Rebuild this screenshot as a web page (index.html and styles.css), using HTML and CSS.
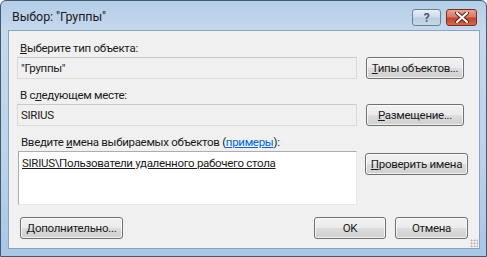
FILE: index.html
```html
<!doctype html>
<html>
  <head>
    <meta charset='utf-8'>
    <title>Выбор: "Группы"</title>
    <link rel="stylesheet" href="styles.css">
  </head>
  <body>

    <div class="window">
      <div class="titlebar">
        <span class="title">Выбор: "Группы"</span>
        <div class="caption">
          <span class="cap help">?</span>
          <span class="cap close">
            <svg width="14" height="11" viewBox="0 0 14 11">
              <path d="M2 1 L12 10 M12 1 L2 10" stroke="#5a1a12" stroke-width="4" stroke-linecap="round"/>
              <path d="M2 1 L12 10 M12 1 L2 10" stroke="#fff" stroke-width="2.2" stroke-linecap="round"/>
            </svg>
          </span>
        </div>
      </div>

      <div class="client">
        <div class="row first">
          <div class="main">
            <div class="label"><u>В</u>ыберите тип объекта:</div>
            <div class="field">"Группы"</div>
          </div>
          <div class="side">
            <button class="btn narrow"><u>Т</u>ипы объектов...</button>
          </div>
        </div>

        <div class="row">
          <div class="main">
            <div class="label">В с<u>л</u>едующем месте:</div>
            <div class="field">SIRIUS</div>
          </div>
          <div class="side">
            <button class="btn narrow"><u>Р</u>азмещение...</button>
          </div>
        </div>

        <div class="row names">
          <div class="main">
            <div class="label">Введите <u>и</u>мена выбираемых объектов (<a class="link">примеры</a>):</div>
            <div class="textbox"><u>SIRIUS\Пользователи удаленного рабочего стола</u></div>
          </div>
          <div class="side">
            <button class="btn wide check"><u>П</u>роверить имена</button>
          </div>
        </div>

        <div class="footer">
          <button class="btn more"><u>Д</u>ополнительно...</button>
          <div class="spacer"></div>
          <button class="btn ok">OK</button>
          <button class="btn cancel">Отмена</button>
        </div>
        <div class="grip"></div>
      </div>
    </div>

  </body>
</html>
```

FILE: styles.css
```css
body {
  margin: 0;
  font-family: Roboto, 'Noto Sans', sans-serif;
  font-size: 11.5px;
  letter-spacing: -0.3px;
  color: #1a1a1a;
}

.window {
  width: 487px;
  height: 257px;
  box-sizing: border-box;
  border: 1px solid #44586e;
  border-radius: 6px 6px 0 0;
  background: linear-gradient(to bottom, #b4cde8 0%, #c6d9ed 12%, #bcd3ea 60%, #a9c6e6 100%);
  padding: 0 6px 7px 7px;
  display: flex;
  flex-direction: column;
}

.titlebar {
  height: 29px;
  display: flex;
  align-items: flex-start;
}
.title {
  padding: 8px 0 0 4px;
  font-size: 12.5px;
  letter-spacing: -0.1px;
}
.caption {
  margin-left: auto;
  margin-top: 8px;
  margin-right: 3px;
  display: flex;
  gap: 5px;
}
.cap {
  height: 17px;
  box-sizing: border-box;
  border: 1px solid #6d7f94;
  border-radius: 3px;
  display: flex;
  align-items: center;
  justify-content: center;
}
.help {
  width: 29px;
  background: linear-gradient(to bottom, #e6eef7 0%, #cddbea 48%, #b9cbdf 52%, #c9d8e8 100%);
  color: #4a5a6d;
  font-weight: bold;
  font-size: 12px;
}
.close {
  width: 31px;
  border-color: #7a2f25;
  background: linear-gradient(to bottom, #e8a493 0%, #d77b67 45%, #c2432b 55%, #d46a4c 100%);
}

.client {
  flex: 1;
  position: relative;
  background: #f0f0f0;
  border: 1px solid #8aa3bf;
  padding: 9px 11px 0 8px;
}

.row {
  display: flex;
  align-items: flex-end;
  gap: 8px;
  margin-bottom: 8px;
}
.row.names {
  margin-top: 2px;
  align-items: flex-start;
}
.main {
  flex: 1;
}
.side {
  width: 103px;
}
.label {
  padding-left: 3px;
  height: 17px;
  line-height: 17px;
  white-space: nowrap;
}
.field {
  height: 22px;
  box-sizing: border-box;
  border: 1px solid #d7dadf;
  border-top-color: #c6c9cd;
  background: #f0f0f0;
  padding: 2px 3px;
  line-height: 16px;
}

.btn {
  font: inherit;
  letter-spacing: inherit;
  color: inherit;
  height: 22px;
  box-sizing: border-box;
  border: 1px solid #707070;
  border-radius: 3px;
  background: linear-gradient(to bottom, #f2f2f2 0%, #ebebeb 48%, #dddddd 52%, #cfcfcf 100%);
  box-shadow: inset 0 0 0 1px rgba(255,255,255,0.7);
  padding: 0;
  white-space: nowrap;
}
.narrow {
  width: 98px;
  margin-left: 1px;
}
.wide {
  width: 103px;
}
.check {
  margin-top: 19px;
}

.names .main {
  margin-left: 1px;
}
.textbox {
  height: 54px;
  box-sizing: border-box;
  background: #fff;
  border: 1px solid #e3e9ef;
  border-top-color: #abadb3;
  border-left-color: #abadb3;
  padding: 3px 3px;
  line-height: 16px;
  white-space: nowrap;
}
.link {
  color: #0066cc;
  text-decoration: underline;
}

.footer {
  display: flex;
  margin-top: 12px;
  gap: 9px;
}
.more {
  width: 103px;
  margin-left: 3px;
}
.spacer {
  flex: 1;
}
.ok {
  width: 72px;
}
.cancel {
  width: 73px;
}

.grip {
  position: absolute;
  right: 1px;
  bottom: 1px;
  width: 8px;
  height: 8px;
  background: radial-gradient(circle, #b8b8b8 45%, transparent 50%) 0 0 / 3px 3px;
}
```
